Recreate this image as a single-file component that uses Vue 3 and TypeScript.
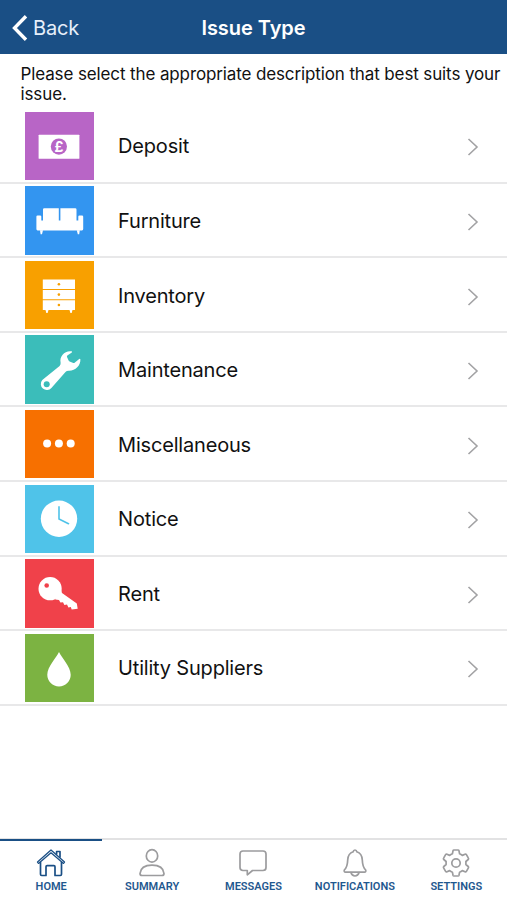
<script setup lang="ts">
interface Issue {
  id: string
  label: string
}

interface Tab {
  id: string
  label: string
}

const issues: Issue[] = [
  { id: 'deposit', label: 'Deposit' },
  { id: 'furniture', label: 'Furniture' },
  { id: 'inventory', label: 'Inventory' },
  { id: 'maintenance', label: 'Maintenance' },
  { id: 'miscellaneous', label: 'Miscellaneous' },
  { id: 'notice', label: 'Notice' },
  { id: 'rent', label: 'Rent' },
  { id: 'utility', label: 'Utility Suppliers' },
]

const tabs: Tab[] = [
  { id: 'home', label: 'HOME' },
  { id: 'summary', label: 'SUMMARY' },
  { id: 'messages', label: 'MESSAGES' },
  { id: 'notifications', label: 'NOTIFICATIONS' },
  { id: 'settings', label: 'SETTINGS' },
]

const activeTab = 'home'
</script>

<template>
  <div class="screen">
    <header class="bar">
      <button class="back">
        <svg class="back-icon" viewBox="0 0 16 26" fill="none" stroke="#fff" stroke-width="3.4">
          <path d="M14 1.2 2.5 13 14 24.8" />
        </svg>
        <span>Back</span>
      </button>
      <h1 class="title">Issue Type</h1>
    </header>

    <p class="intro">Please select the appropriate description that best suits your issue.</p>

    <ul class="list">
      <li v-for="issue in issues" :key="issue.id" class="row">
        <svg class="tile" :class="issue.id" viewBox="0 0 68.5 68.5" fill="#fff">
          <template v-if="issue.id === 'deposit'">
            <rect x="13.6" y="22.7" width="40.8" height="24" rx=".5" />
            <circle class="cut" cx="33.9" cy="34.6" r="8.1" />
            <text class="pound" x="33.9" y="39.6" text-anchor="middle">£</text>
          </template>
          <template v-else-if="issue.id === 'furniture'">
            <path d="M19.3 22.3H33.8V34.6H35.4V22.3H50.2Q51.5 22.3 51.5 23.6V34.6H53.3V30.6Q53.3 29.5 54.5 29.5H57Q58.2 29.5 58.2 30.6V43Q58.2 44.4 57 44.4H12.6Q11.4 44.4 11.4 43V30.6Q11.4 29.5 12.6 29.5H15.1Q16.3 29.5 16.3 30.6V34.6H18V23.6Q18 22.3 19.3 22.3Z" />
            <path d="M15 44.2H18L17 48.2H15.6ZM51.8 44.2H54.8L54.2 48.2H52.8Z" />
          </template>
          <template v-else-if="issue.id === 'inventory'">
            <path d="M17.8 18.4H50V27.9H17.8ZM17.8 29H50V38.2H17.8ZM17.8 39.3H50V48.9H17.8ZM20.5 48.9H23.5L22.6 52H21.3ZM44.5 48.9H47.5L46.7 52H45.4Z" />
            <g class="cut">
              <circle cx="33.9" cy="23.2" r="1.3" />
              <circle cx="33.9" cy="33.6" r="1.3" />
              <circle cx="33.9" cy="44" r="1.3" />
            </g>
          </template>
          <template v-else-if="issue.id === 'maintenance'">
            <path d="M46.6 16.3C40 15.2 34.3 21 35.6 27.6Q36 29.6 34.6 31L17.3 45.1A5.9 5.9 0 1 0 26.4 53L40.5 37Q41.6 35.7 43.6 35.7C50.3 36 55.6 30.6 55.4 24.5Q55.1 23.4 54.2 24L49.6 27.8Q49 28.2 48.3 27.9L44.6 26.6Q43.9 26.3 43.6 25.6L42 22Q41.7 21.2 42.3 20.6L46.8 17.4Q47.5 16.7 46.6 16.3Z" />
            <circle class="cut" cx="21.7" cy="49.3" r="3" />
          </template>
          <template v-else-if="issue.id === 'miscellaneous'">
            <circle cx="22.1" cy="33.4" r="4" />
            <circle cx="33.9" cy="33.4" r="4" />
            <circle cx="45.7" cy="33.4" r="4" />
          </template>
          <template v-else-if="issue.id === 'notice'">
            <circle cx="34" cy="33.7" r="18.2" />
            <path class="hands" d="M34 21.9V34L43.5 38.7" />
          </template>
          <template v-else-if="issue.id === 'rent'">
            <circle cx="25.1" cy="29.7" r="11.6" />
            <path d="M35.8 30.2 37 34 51.8 44.4 52.7 49.7 46.7 50.6 45.8 47.9 43.4 48.4 42 45.6 39.4 46 38 43.2 35.4 43.6 34 41 30.2 40.5Z" />
            <circle class="cut" cx="21.7" cy="26.5" r="2.3" />
          </template>
          <template v-else>
            <path d="M34 18C36.5 23.8 45.7 32.4 45.7 40.8A11.7 11.7 0 0 1 22.3 40.8C22.3 32.4 31.5 23.8 34 18Z" />
          </template>
        </svg>
        <span class="label">{{ issue.label }}</span>
        <svg class="chevron" viewBox="0 0 12 18" fill="none" stroke="#a2a2a4" stroke-width="1.6">
          <path d="M1.5 1 10 9 1.5 17" />
        </svg>
      </li>
    </ul>

    <nav class="tabs">
      <button v-for="tab in tabs" :key="tab.id" class="tab" :class="{ active: tab.id === activeTab }">
        <svg class="tab-icon" viewBox="0 0 30 30" fill="none" stroke="currentColor" stroke-width="1.7" stroke-linecap="round" stroke-linejoin="round">
          <template v-if="tab.id === 'home'">
            <path d="M4.5 14.3V26.3Q4.5 27.5 5.7 27.5H10V18.8Q10 17.7 11.1 17.7H17.9Q19 17.7 19 18.8V27.5H24.3Q25.5 27.5 25.5 26.3V14.3" />
            <path d="M1.5 14 15 2 28.5 14 27.5 15.4 15 4.8 2.5 15.4Z" stroke-width="1.3" />
            <path d="M20.6 6V3.5H24V9" />
          </template>
          <template v-else-if="tab.id === 'summary'">
            <ellipse cx="15" cy="7.9" rx="5.7" ry="6.2" />
            <path d="M3 25.5Q3.8 17.2 15 17.2T27 25.5Q27 27.5 25 27.5H5Q3 27.5 3 25.5Z" />
          </template>
          <template v-else-if="tab.id === 'messages'">
            <path d="M5 3H25Q28 3 28 6V19.5Q28 22.5 25 22.5H14.5L9.3 26.8V22.5H5Q2 22.5 2 19.5V6Q2 3 5 3Z" />
          </template>
          <template v-else-if="tab.id === 'notifications'">
            <path d="M13.2 3.8Q13.4 2 15 2T16.8 3.8Q22 5.5 22.3 12Q22.5 19 25.7 22Q26.2 24.2 24.5 24.2H5.5Q3.8 24.2 4.3 22Q7.5 19 7.7 12Q8 5.5 13.2 3.8Z" />
            <path d="M10.9 24.5Q12 28 15 28T19.1 24.5" />
          </template>
          <template v-else>
            <path d="M13 2H17Q17.8 2 18 2.8L18.6 5.8Q20.2 6.4 21.3 7.4L24 6.2Q24.9 5.8 25.4 6.6L27.4 10.1Q27.9 10.9 27.2 11.5L24.9 13.5V16.5L27.2 18.5Q27.9 19.1 27.4 19.9L25.4 23.4Q24.9 24.2 24 23.8L21.3 22.6Q20.2 23.6 18.6 24.2L18 27.2Q17.8 28 17 28H13Q12.2 28 12 27.2L11.4 24.2Q9.8 23.6 8.7 22.6L6 23.8Q5.1 24.2 4.6 23.4L2.6 19.9Q2.1 19.1 2.8 18.5L5.1 16.5V13.5L2.8 11.5Q2.1 10.9 2.6 10.1L4.6 6.6Q5.1 5.8 6 6.2L8.7 7.4Q9.8 6.4 11.4 5.8L12 2.8Q12.2 2 13 2Z" />
            <circle cx="15" cy="15" r="4.2" />
          </template>
        </svg>
        <span class="tab-label">{{ tab.label }}</span>
      </button>
    </nav>
  </div>
</template>

<style>
body {
  background: #fff;
}
</style>

<style scoped>
.screen {
  display: flex;
  flex-direction: column;
  height: 900px;
  overflow: hidden;
  background: #fff;
  color: #111;
  font-family: Inter, "Liberation Sans", sans-serif;
}

button {
  border: 0;
  padding: 0;
  background: none;
  font: inherit;
  color: inherit;
}

.bar {
  display: grid;
  grid-template-columns: 1fr auto 1fr;
  align-items: center;
  flex: none;
  height: 54.4px;
  box-sizing: border-box;
  padding-top: 1px;
  background: #1a4f85;
  color: #fff;
}

.back {
  display: flex;
  align-items: center;
  padding-left: 12px;
  gap: 5px;
  font-size: 20px;
  letter-spacing: -0.2px;
  color: #e6effa;
}

.back-icon {
  width: 16px;
  height: 26px;
}

.title {
  margin: 0;
  font-size: 20px;
  font-weight: 600;
  letter-spacing: -0.05px;
}

.intro {
  flex: none;
  height: 54.8px;
  margin: 0;
  padding: 9.2px 0 0 20.5px;
  box-sizing: border-box;
  font-size: 17px;
  line-height: 20.8px;
  letter-spacing: -0.12px;
}

.list {
  flex: 1;
  margin: 0;
  padding: 0;
  list-style: none;
}

.row {
  display: flex;
  align-items: center;
  height: 74.57px;
  box-sizing: border-box;
  padding: 1px 28px 0 25.3px;
  border-bottom: 2px solid #e8e8e9;
}

.tile {
  flex: none;
  width: 68.5px;
  height: 68.5px;
}

.deposit { background: #b865c6; color: #b865c6; }
.furniture { background: #3395f0; color: #3395f0; }
.inventory { background: #f8a000; color: #f8a000; }
.maintenance { background: #3bbdba; color: #3bbdba; }
.miscellaneous { background: #f77000; color: #f77000; }
.notice { background: #4fc3e9; color: #4fc3e9; }
.rent { background: #f0414a; color: #f0414a; }
.utility { background: #7cb342; color: #7cb342; }

.cut {
  fill: currentColor;
}

.pound {
  font-size: 14px;
  font-weight: 700;
}

.hands {
  fill: none;
  stroke: currentColor;
  stroke-width: 1.6;
  stroke-linecap: round;
}

.label {
  flex: 1;
  padding: 1px 0 0 24.3px;
  font-size: 20px;
  letter-spacing: -0.19px;
}

.chevron {
  width: 12px;
  height: 18px;
  margin-top: 3px;
}

.tabs {
  display: grid;
  grid-template-columns: repeat(5, 1fr);
  flex: none;
  height: 62.5px;
  box-sizing: border-box;
  border-top: 2px solid #e2e2e3;
}

.tab {
  display: flex;
  flex-direction: column;
  align-items: center;
  padding-top: 8px;
  color: #9c9c9e;
}

.tab.active {
  margin: -1px -1px 0 0;
  padding-top: 7px;
  border-top: 2px solid #1a4f85;
  color: #1a4f85;
}

.tab-icon {
  width: 30px;
  height: 30px;
}

.tab-label {
  margin-top: 2.4px;
  font-family: Roboto, sans-serif;
  font-size: 11px;
  font-weight: 600;
  line-height: 14px;
  color: #1f588f;
}
</style>
